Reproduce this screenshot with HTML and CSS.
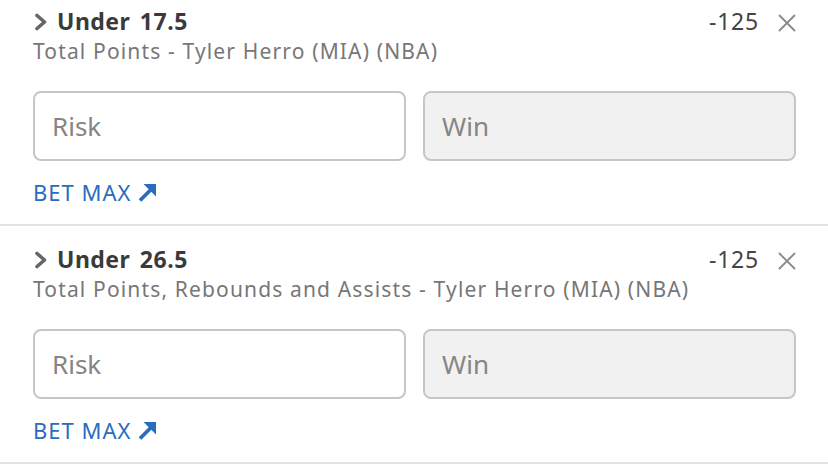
FILE: index.html
```html
<!DOCTYPE html>
<html>
<head>
<meta charset="utf-8">
<link rel="stylesheet" href="styles.css">
</head>
<body>
<div class="slip">
  <section class="bet">
    <div class="head">
      <div class="title">
        <svg class="chev" width="14" height="18" viewBox="0 0 14 18"><path d="M3 2.5 L10.5 9 L3 15.5" fill="none" stroke="#666666" stroke-width="3.6" stroke-linecap="round" stroke-linejoin="round"/></svg>
        <span>Under 17.5</span>
      </div>
      <div class="right">
        <span class="odds">-125</span>
        <svg class="close" width="18" height="18" viewBox="0 0 18 18"><path d="M1.5 1.5 L16.5 16.5 M16.5 1.5 L1.5 16.5" stroke="#8a8a8a" stroke-width="1.8" stroke-linecap="round"/></svg>
      </div>
    </div>
    <div class="sub">Total Points - Tyler Herro (MIA) (NBA)</div>
    <div class="inputs">
      <div class="field">Risk</div>
      <div class="field win">Win</div>
    </div>
    <div class="betmax"><span>BET MAX</span>
      <svg class="arrow" width="21" height="21" viewBox="0 0 21 21"><path d="M3 18.5 L15.5 6" stroke="#2a6cbd" stroke-width="3.8"/><path d="M6.5 2 L19 2 L19 14.5 Z" fill="#2a6cbd"/></svg>
    </div>
  </section>
  <section class="bet">
    <div class="head">
      <div class="title">
        <svg class="chev" width="14" height="18" viewBox="0 0 14 18"><path d="M3 2.5 L10.5 9 L3 15.5" fill="none" stroke="#666666" stroke-width="3.6" stroke-linecap="round" stroke-linejoin="round"/></svg>
        <span>Under 26.5</span>
      </div>
      <div class="right">
        <span class="odds">-125</span>
        <svg class="close" width="18" height="18" viewBox="0 0 18 18"><path d="M1.5 1.5 L16.5 16.5 M16.5 1.5 L1.5 16.5" stroke="#8a8a8a" stroke-width="1.8" stroke-linecap="round"/></svg>
      </div>
    </div>
    <div class="sub">Total Points, Rebounds and Assists - Tyler Herro (MIA) (NBA)</div>
    <div class="inputs">
      <div class="field">Risk</div>
      <div class="field win">Win</div>
    </div>
    <div class="betmax"><span>BET MAX</span>
      <svg class="arrow" width="21" height="21" viewBox="0 0 21 21"><path d="M3 18.5 L15.5 6" stroke="#2a6cbd" stroke-width="3.8"/><path d="M6.5 2 L19 2 L19 14.5 Z" fill="#2a6cbd"/></svg>
    </div>
  </section>
</div>
</body>
</html>
```

FILE: styles.css
```css
html, body {
  margin: 0;
  padding: 0;
  background: #ffffff;
}
body {
  font-family: "Noto Sans", "Open Sans", sans-serif;
  width: 828px;
  height: 464px;
  overflow: hidden;
}
.slip {
  margin-top: -12px;
}
.bet {
  box-sizing: border-box;
  height: 238px;
  padding: 18px 32px 0 33px;
  border-bottom: 2px solid #e3e3e3;
}
.head {
  display: flex;
  justify-content: space-between;
  align-items: center;
  height: 30px;
}
.title {
  display: flex;
  align-items: center;
  gap: 9px;
  font-size: 23px;
  line-height: 30px;
  font-weight: 700;
  color: #3a3a3a;
  letter-spacing: 0.5px;
  word-spacing: 3px;
}
.chev {
  flex-shrink: 0;
  margin-left: 1px;
  margin-top: 1px;
}
.right {
  display: flex;
  align-items: center;
  gap: 19px;
}
.odds {
  font-size: 23px;
  line-height: 30px;
  letter-spacing: 0.8px;
  color: #444444;
}
.close {
  flex-shrink: 0;
  margin-top: 4px;
}
.sub {
  font-size: 21px;
  line-height: 30px;
  letter-spacing: 1.15px;
  color: #777777;
}
.inputs {
  display: grid;
  grid-template-columns: 1fr 1fr;
  gap: 17px;
  margin-top: 25px;
}
.field {
  box-sizing: border-box;
  height: 70px;
  border: 2px solid #c6c6c6;
  border-radius: 8px;
  display: flex;
  align-items: center;
  padding-left: 17px;
  font-size: 26px;
  color: #858585;
}
.field.win {
  background: #f1f1f1;
}
.betmax {
  margin-top: 18px;
  display: flex;
  align-items: center;
  gap: 6px;
  font-size: 22px;
  line-height: 26px;
  letter-spacing: 1px;
  color: #2a6cbd;
}
.arrow {
  flex-shrink: 0;
}
```
